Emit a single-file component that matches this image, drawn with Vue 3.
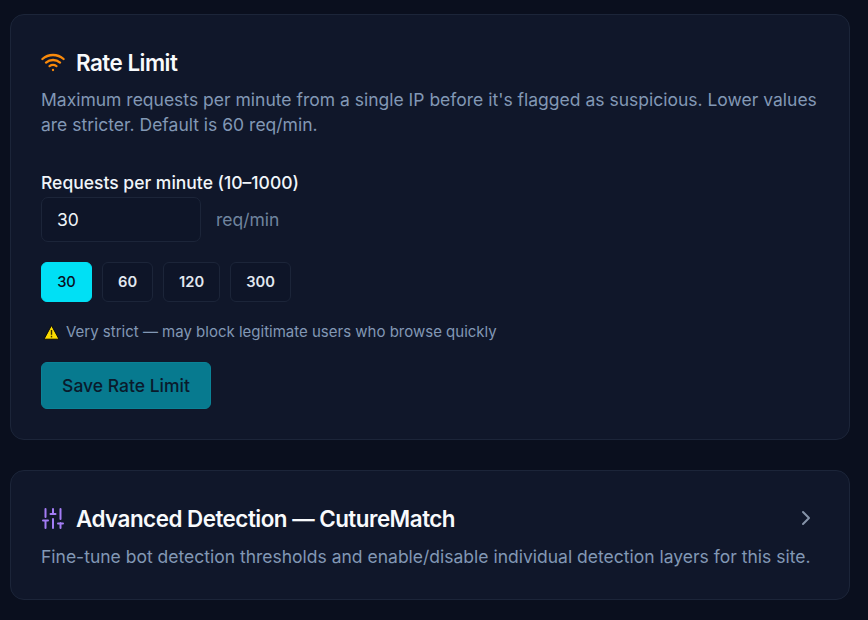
<template>
  <div class="page">
    <section class="card">
      <h2 class="title">
        <svg class="icon" width="24" height="24" viewBox="0 0 24 24" fill="none" stroke="#f98a0b" stroke-width="2.3" stroke-linecap="round" stroke-linejoin="round">
          <path d="M5 12.55a11 11 0 0 1 14.08 0" />
          <path d="M1.42 9a16 16 0 0 1 21.16 0" />
          <path d="M8.53 16.11a6 6 0 0 1 6.95 0" />
          <path d="M12 20h.01" />
        </svg>
        Rate Limit
      </h2>
      <p class="desc">Maximum requests per minute from a single IP before it's flagged as suspicious. Lower values are stricter. Default is 60 req/min.</p>

      <label class="label" for="rate">Requests per minute (10–1000)</label>
      <div class="input-row">
        <input id="rate" v-model="rate" class="input" type="text" />
        <span class="unit">req/min</span>
      </div>

      <div class="presets">
        <button
          v-for="p in presets"
          :key="p"
          class="preset"
          :class="{ active: String(p) === String(rate) }"
          @click="rate = p"
        >{{ p }}</button>
      </div>

      <p class="warning">
        <svg class="warn-icon" width="17" height="17" viewBox="0 0 17 17">
          <path d="M8.5 1.4 16 15.2H1Z" fill="#fcdc00" stroke="#0b0a08" stroke-width="1" stroke-linejoin="round" />
          <path d="M8.5 6v4.8" stroke="#3a3000" stroke-width="1.4" />
          <path d="M8.5 11.8v1.6" stroke="#3a3000" stroke-width="1.4" />
        </svg>
        Very strict — may block legitimate users who browse quickly
      </p>

      <button class="save">Save Rate Limit</button>
    </section>

    <section class="card card-small">
      <div class="head">
        <h2 class="title">
          <svg class="icon icon-sliders" width="22" height="22" viewBox="0 0 22 22" fill="none" stroke="#a37cf5" stroke-width="2" stroke-linecap="round" stroke-linejoin="round">
            <path d="M3.5 21v-7M3.5 10V2M11 21v-9M11 6V2M18.5 21v-5M18.5 12V2M1 13.5h5M8.5 7h5M16 16.5h5" />
          </svg>
          Advanced Detection — CutureMatch
        </h2>
        <svg class="chevron" width="24" height="24" viewBox="0 0 24 24" fill="none" stroke="#8593a8" stroke-width="2" stroke-linecap="round" stroke-linejoin="round">
          <path d="m9 18 6-6-6-6" />
        </svg>
      </div>
      <p class="desc small-gap">Fine-tune bot detection thresholds and enable/disable individual detection layers for this site.</p>
    </section>
  </div>
</template>

<script setup>
import { ref } from 'vue'

const presets = [30, 60, 120, 300]
const rate = ref('30')
</script>

<style scoped>
.page {
  height: 620px;
  box-sizing: border-box;
  padding: 14px 18px 0 10px;
  display: flex;
  flex-direction: column;
  gap: 30px;
  overflow: hidden;
  background: #0a0f1e;
  font-family: Inter, "Liberation Sans", sans-serif;
}

.card {
  height: 426px;
  box-sizing: border-box;
  padding: 30px;
  background: #10172a;
  border: 1px solid #1c2539;
  border-radius: 14px;
}

.card-small {
  height: 130px;
}

.title {
  margin: 0;
  display: flex;
  align-items: center;
  gap: 11px;
  font-size: 22.4px;
  line-height: 36px;
  font-weight: 600;
  letter-spacing: -0.5px;
  color: #f8fafc;
}

.icon {
  flex: none;
  margin-top: -2px;
}

.icon-sliders {
  margin-left: 1px;
  margin-right: 1px;
}

.desc {
  margin: 6px 0 0;
  font-size: 17.5px;
  line-height: 25px;
  color: #8298b5;
}

.small-gap {
  margin-top: 7px;
}

.label {
  display: block;
  margin-top: 34px;
  font-size: 17.5px;
  line-height: 24px;
  font-weight: 500;
  color: #f1f5f9;
}

.input-row {
  display: flex;
  align-items: center;
  gap: 15px;
  margin-top: 2px;
}

.input {
  width: 160px;
  height: 45px;
  box-sizing: border-box;
  padding: 0 15px;
  background: #0e1528;
  border: 1px solid #1c2539;
  border-radius: 7px;
  outline: none;
  font-family: inherit;
  font-size: 17.5px;
  color: #f1f5f9;
}

.unit {
  font-size: 17.5px;
  color: #6f849e;
}

.presets {
  display: flex;
  gap: 10px;
  margin-top: 20px;
}

.preset {
  height: 40px;
  padding: 0 15px;
  background: #0e1528;
  border: 1px solid #1c2539;
  border-radius: 6px;
  font-family: inherit;
  font-size: 14.7px;
  font-weight: 600;
  color: #e2e8f0;
}

.preset.active {
  width: 51px;
  padding: 0;
  background: #00e0f5;
  border-color: #00e0f5;
  font-weight: 500;
  color: #0a0f1e;
}

.warning {
  display: flex;
  align-items: center;
  gap: 6px;
  margin: 20px 0 0;
  font-size: 15px;
  line-height: 20px;
  color: #8298b5;
}

.warn-icon {
  flex: none;
  margin-left: 2px;
}

.save {
  display: block;
  width: 170px;
  height: 47px;
  margin-top: 20px;
  background: #077a8f;
  border: 1px solid #0a8296;
  border-radius: 6px;
  font-family: inherit;
  font-size: 17.5px;
  font-weight: 500;
  color: #0a1a2c;
}

.head {
  display: flex;
  align-items: center;
  justify-content: space-between;
}

.chevron {
  margin-top: -2px;
  margin-right: 1px;
}
</style>

<style>
html,
body {
  margin: 0;
  background: #0a0f1e;
}
</style>
